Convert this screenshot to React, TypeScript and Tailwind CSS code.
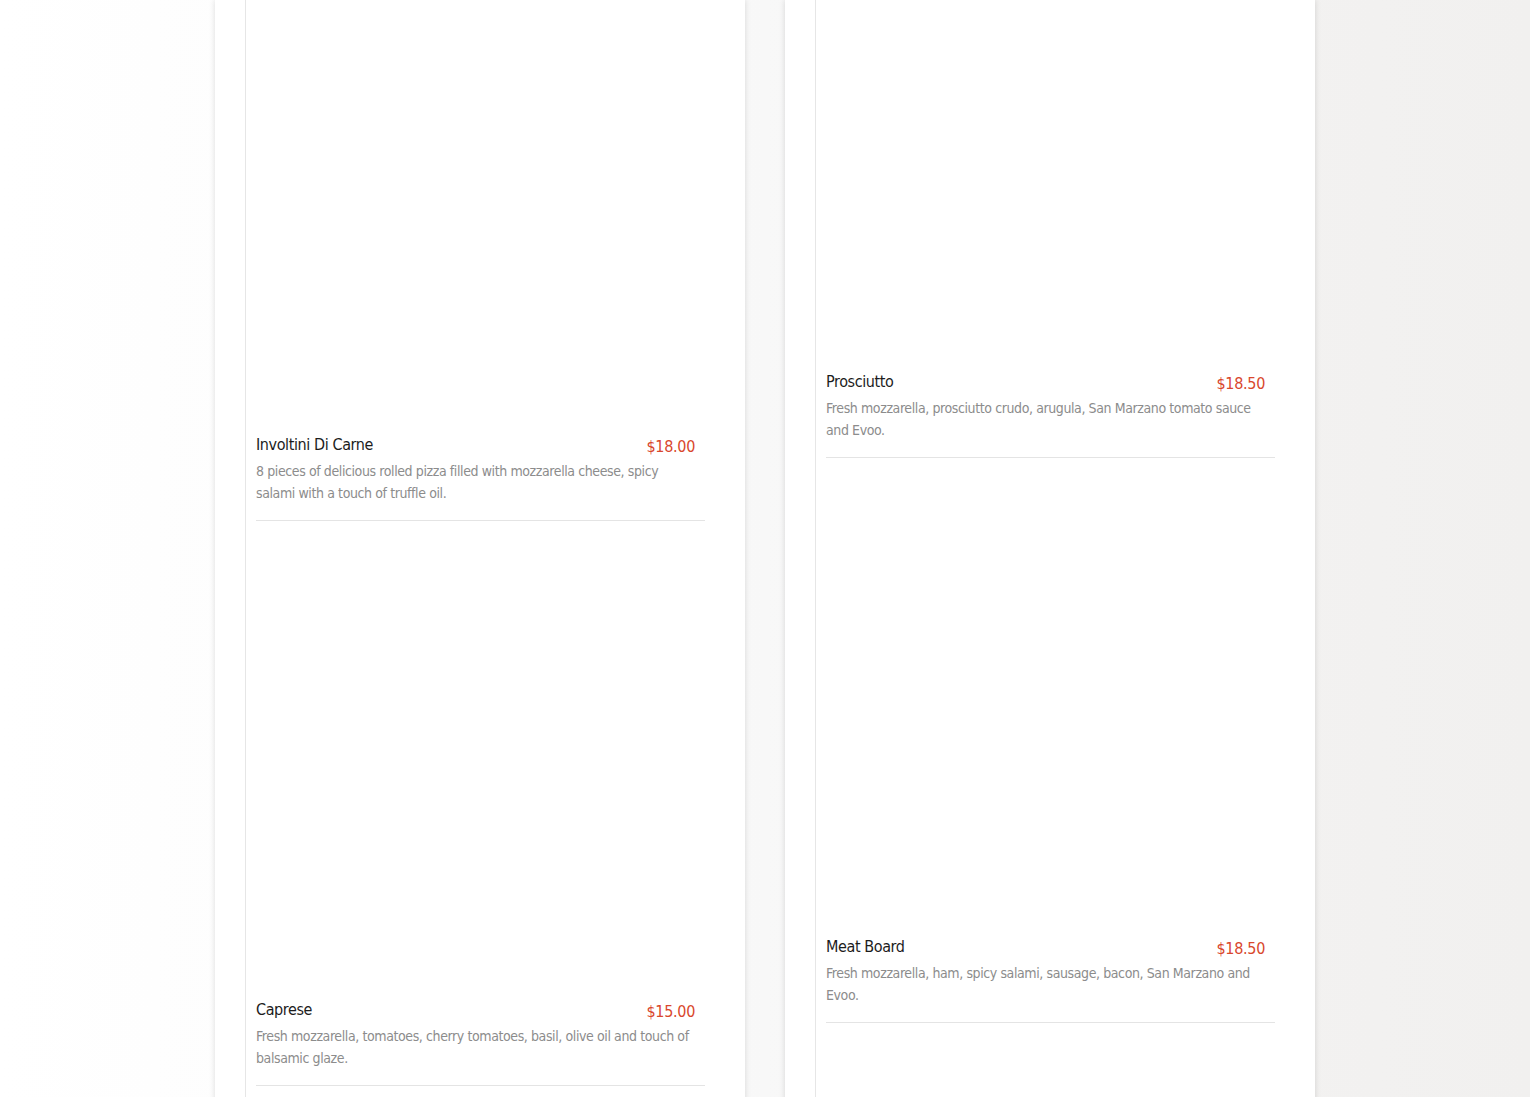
import React from "react";

type MenuItem = {
  name: string;
  price: string;
  description: string;
};

const leftItems: MenuItem[] = [
  {
    name: "Involtini Di Carne",
    price: "$18.00",
    description:
      "8 pieces of delicious rolled pizza filled with mozzarella cheese, spicy salami with a touch of truffle oil.",
  },
  {
    name: "Caprese",
    price: "$15.00",
    description:
      "Fresh mozzarella, tomatoes, cherry tomatoes, basil, olive oil and touch of balsamic glaze.",
  },
];

const rightItems: MenuItem[] = [
  {
    name: "Prosciutto",
    price: "$18.50",
    description:
      "Fresh mozzarella, prosciutto crudo, arugula, San Marzano tomato sauce and Evoo.",
  },
  {
    name: "Meat Board",
    price: "$18.50",
    description:
      "Fresh mozzarella, ham, spicy salami, sausage, bacon, San Marzano and Evoo.",
  },
];

const font = {
  fontFamily:
    '"DejaVu Sans Condensed", "Liberation Sans Narrow", "Roboto Condensed", Roboto, sans-serif',
};

function MenuCard({ item }: { item: MenuItem }) {
  return (
    <div className="border-b border-[#e4e4e4]">
      {/* photo slot, image not loaded */}
      <div className="h-[460px] bg-white" />
      <div className="mt-4 pb-4">
        <div className="flex items-start justify-between pr-[10px]">
          <h3 className="mt-px text-[16px] leading-6 tracking-[-0.4px] text-[#1c1c1c]">
            {item.name}
          </h3>
          <span className="mt-[3px] text-[16px] leading-6 tracking-[-0.3px] text-[#d9472d]">
            {item.price}
          </span>
        </div>
        <p className="mt-px pr-[10px] text-[14px] leading-[22px] tracking-[-0.4px] text-[#8c8c8c]">
          {item.description}
        </p>
      </div>
    </div>
  );
}

function MenuColumn({ items, offset }: { items: MenuItem[]; offset: string }) {
  return (
    <section className="w-[530px] self-start bg-white px-[30px] shadow-[0_0_6px_rgba(0,0,0,0.14)]">
      <div className="border-l border-[#e6e6e6] pl-[10px] pr-[10px]">
        <div className={offset}>
          {items.map((item) => (
            <MenuCard key={item.name} item={item} />
          ))}
          <div className="h-[460px]" />
        </div>
      </div>
    </section>
  );
}

export default function App() {
  return (
    <div
      className="flex h-screen justify-center gap-10 overflow-hidden bg-[linear-gradient(90deg,#ffffff_0%,#fdfdfd_20%,#f8f8f8_50%,#f3f2f1_80%,#f1f0ef_100%)]"
      style={font}
    >
      <MenuColumn items={leftItems} offset="-mt-[44px]" />
      <MenuColumn items={rightItems} offset="-mt-[107px]" />
    </div>
  );
}
